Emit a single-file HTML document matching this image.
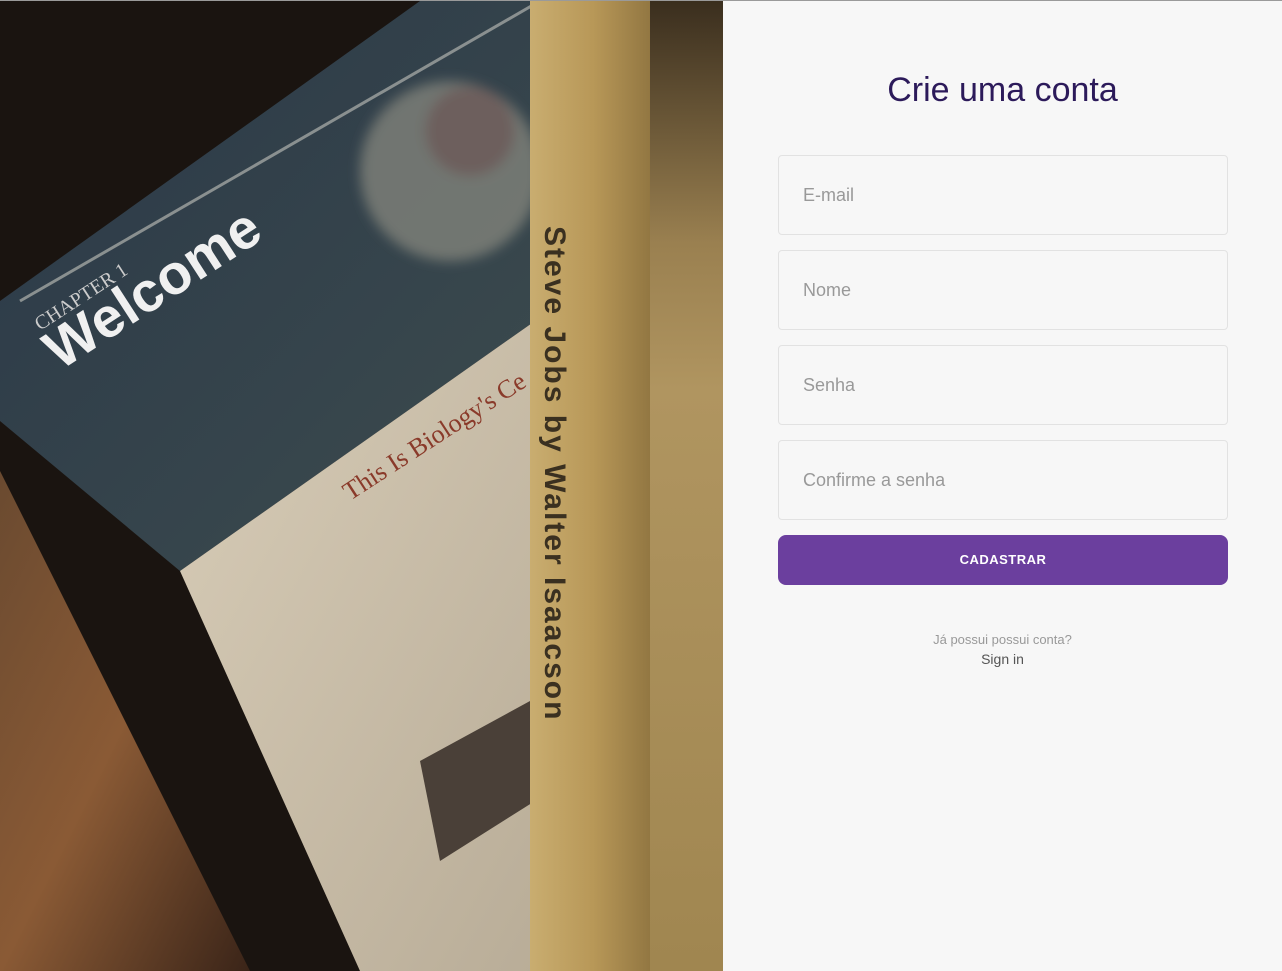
<!DOCTYPE html>
<html><head><meta charset="utf-8"><style>
html,body{margin:0;padding:0;width:1282px;height:971px;overflow:hidden;background:#f7f7f7;font-family:"Liberation Sans",sans-serif}
.top{position:absolute;left:0;top:0;width:1282px;height:1px;background:#9a9a9a}
.left{position:absolute;left:0;top:1px;width:723px;height:970px;overflow:hidden}
.right{position:absolute;left:723px;top:1px;width:559px;height:970px;background:#f7f7f7}
h1{position:absolute;left:0;width:559px;top:70px;margin:0;text-align:center;font-weight:400;font-size:34px;color:#2c1a5a}
.in{position:absolute;left:55px;height:80px;border:1px solid #e2e2e2;border-radius:4px;box-sizing:border-box;width:450px;font-size:18px;color:#999;padding-left:24px;line-height:78px}
.btn{position:absolute;left:55px;top:534px;width:450px;height:50px;background:#6b3f9e;border-radius:8px;color:#fff;font-weight:700;font-size:13px;letter-spacing:.5px;text-align:center;line-height:50px}
.q{position:absolute;left:0;width:559px;text-align:center;font-size:13px;color:#999;top:631px}
.s{position:absolute;left:0;width:559px;text-align:center;font-size:14px;color:#555;top:650px}
</style></head><body>
<div class="top"></div>
<div class="left">
<svg width="723" height="970" viewBox="0 0 723 970">
<defs>
<linearGradient id="w" x1="0" y1="0" x2="1" y2="1"><stop offset="0" stop-color="#6a4a30"/><stop offset=".5" stop-color="#8a5a35"/><stop offset="1" stop-color="#3a2418"/></linearGradient>
<linearGradient id="b" x1="0" y1="0" x2="1" y2="1"><stop offset="0" stop-color="#2a3848"/><stop offset="1" stop-color="#3d4c4e"/></linearGradient>
<linearGradient id="p" x1="0" y1="0" x2="1" y2="1"><stop offset="0" stop-color="#d8cdb8"/><stop offset="1" stop-color="#b9ad98"/></linearGradient>
<linearGradient id="sp" x1="0" y1="0" x2="1" y2="0"><stop offset="0" stop-color="#c9ad70"/><stop offset=".5" stop-color="#b89858"/><stop offset="1" stop-color="#8f7440"/></linearGradient>
<linearGradient id="pg" x1="0" y1="0" x2="0" y2="1"><stop offset="0" stop-color="#3a2e1e"/><stop offset=".25" stop-color="#9a8050"/><stop offset=".4" stop-color="#b09560"/><stop offset="1" stop-color="#a08650"/></linearGradient>
<filter id="bl"><feGaussianBlur stdDeviation="6"/></filter>
</defs>
<rect width="723" height="970" fill="#1a1410"/>
<polygon points="0,470 0,970 250,970" fill="url(#w)"/>
<polygon points="0,300 420,0 535,0 535,320 180,570 0,420" fill="url(#b)"/>
<polygon points="180,570 535,320 535,970 360,970" fill="url(#p)"/>
<g filter="url(#bl)"><circle cx="450" cy="170" r="90" fill="#8a8a80" opacity=".7"/>
<circle cx="470" cy="130" r="45" fill="#6a5050" opacity=".6"/></g>
<line x1="20" y1="300" x2="540" y2="0" stroke="#8a9090" stroke-width="3"/>
<polygon points="420,760 530,700 535,800 440,860" fill="#4a4038"/>
<rect x="530" y="0" width="125" height="970" fill="url(#sp)"/>
<rect x="650" y="0" width="73" height="970" fill="url(#pg)"/>
<text x="60" y="370" transform="rotate(-33 60 370)" fill="#f0f0f0" font-size="56" font-weight="700" font-family="Liberation Sans">Welcome</text>
<text x="40" y="330" transform="rotate(-33 40 330)" fill="#ccc" font-size="20" font-family="Liberation Serif">CHAPTER 1</text>
<text x="350" y="500" transform="rotate(-33 350 500)" fill="#8a3a2a" font-size="26" font-family="Liberation Serif">This Is Biology's Ce</text>
<text x="545" y="225" transform="rotate(90 545 225)" fill="#3a3020" font-size="30" font-weight="700" letter-spacing="2" font-family="Liberation Sans">Steve Jobs by Walter Isaacson</text>
</svg>
</div>
<div class="right">
<h1>Crie uma conta</h1>
<div class="in" style="top:154px">E-mail</div>
<div class="in" style="top:249px">Nome</div>
<div class="in" style="top:344px">Senha</div>
<div class="in" style="top:439px">Confirme a senha</div>
<div class="btn">CADASTRAR</div>
<div class="q">Já possui possui conta?</div>
<div class="s">Sign in</div>
</div>
</body></html>
